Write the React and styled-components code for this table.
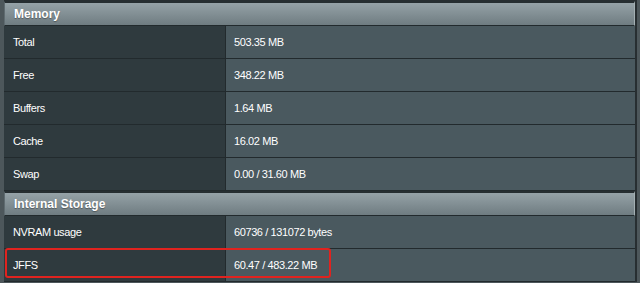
import React from "react";
import styled, { createGlobalStyle } from "styled-components";

const Global = createGlobalStyle`
  html, body {
    margin: 0;
    padding: 0;
    background: #4d575b;
  }
  body {
    font-family: "Liberation Sans", Arial, sans-serif;
    font-size: 11px;
    color: #fff;
  }
`;

const Page = styled.div`
  width: 640px;
  height: 283px;
  overflow: hidden;
  padding: 0 3px 0 4px;
  box-sizing: border-box;
`;

const Table = styled.div`
  border-top: 1px solid #272e31;
  border-right: 2px solid #272e31;
  background: #2b3336;
`;

const Header = styled.div`
  height: 22px;
  display: flex;
  align-items: center;
  padding-left: 9px;
  font-weight: bold;
  font-size: 12px;
  color: #fff;
  text-shadow: 0 1px 1px rgba(0, 0, 0, 0.35);
  background: linear-gradient(#95a2a7, #6f7c81);
  border-top: 2px solid #262e31;
  border-bottom: 1px solid #222a2d;
  border-left: 1px solid #5f6b70;
  border-right: 1px solid #a3afb3;
`;

const Row = styled.div`
  display: grid;
  grid-template-columns: 222px 1fr;
  height: 32px;
  border-bottom: 1px solid #222a2d;
  position: relative;
`;

const Label = styled.div`
  display: flex;
  align-items: center;
  padding-left: 9px;
  letter-spacing: -0.4px;
  background: #2f3a3e;
  border-right: 1px solid #222a2d;
`;

const Value = styled.div`
  display: flex;
  align-items: center;
  padding-left: 8px;
  letter-spacing: -0.4px;
  background: #4a595f;
`;

const Highlight = styled.div`
  position: absolute;
  left: 1px;
  top: -1px;
  width: 326px;
  height: 30px;
  border: 2px solid #e0231f;
  border-radius: 3px;
  box-sizing: border-box;
  pointer-events: none;
`;

const sections = [
  {
    title: "Memory",
    rows: [
      ["Total", "503.35 MB"],
      ["Free", "348.22 MB"],
      ["Buffers", "1.64 MB"],
      ["Cache", "16.02 MB"],
      ["Swap", "0.00 / 31.60 MB"],
    ],
  },
  {
    title: "Internal Storage",
    rows: [
      ["NVRAM usage", "60736 / 131072 bytes"],
      ["JFFS", "60.47 / 483.22 MB", true],
    ],
  },
];

export default function App() {
  return (
    <Page>
      <Global />
      <Table>
        {sections.map((s) => (
          <React.Fragment key={s.title}>
            <Header>{s.title}</Header>
            {s.rows.map(([k, v, mark]) => (
              <Row key={k}>
                <Label>{k}</Label>
                <Value>{v}</Value>
                {mark && <Highlight />}
              </Row>
            ))}
          </React.Fragment>
        ))}
      </Table>
    </Page>
  );
}
